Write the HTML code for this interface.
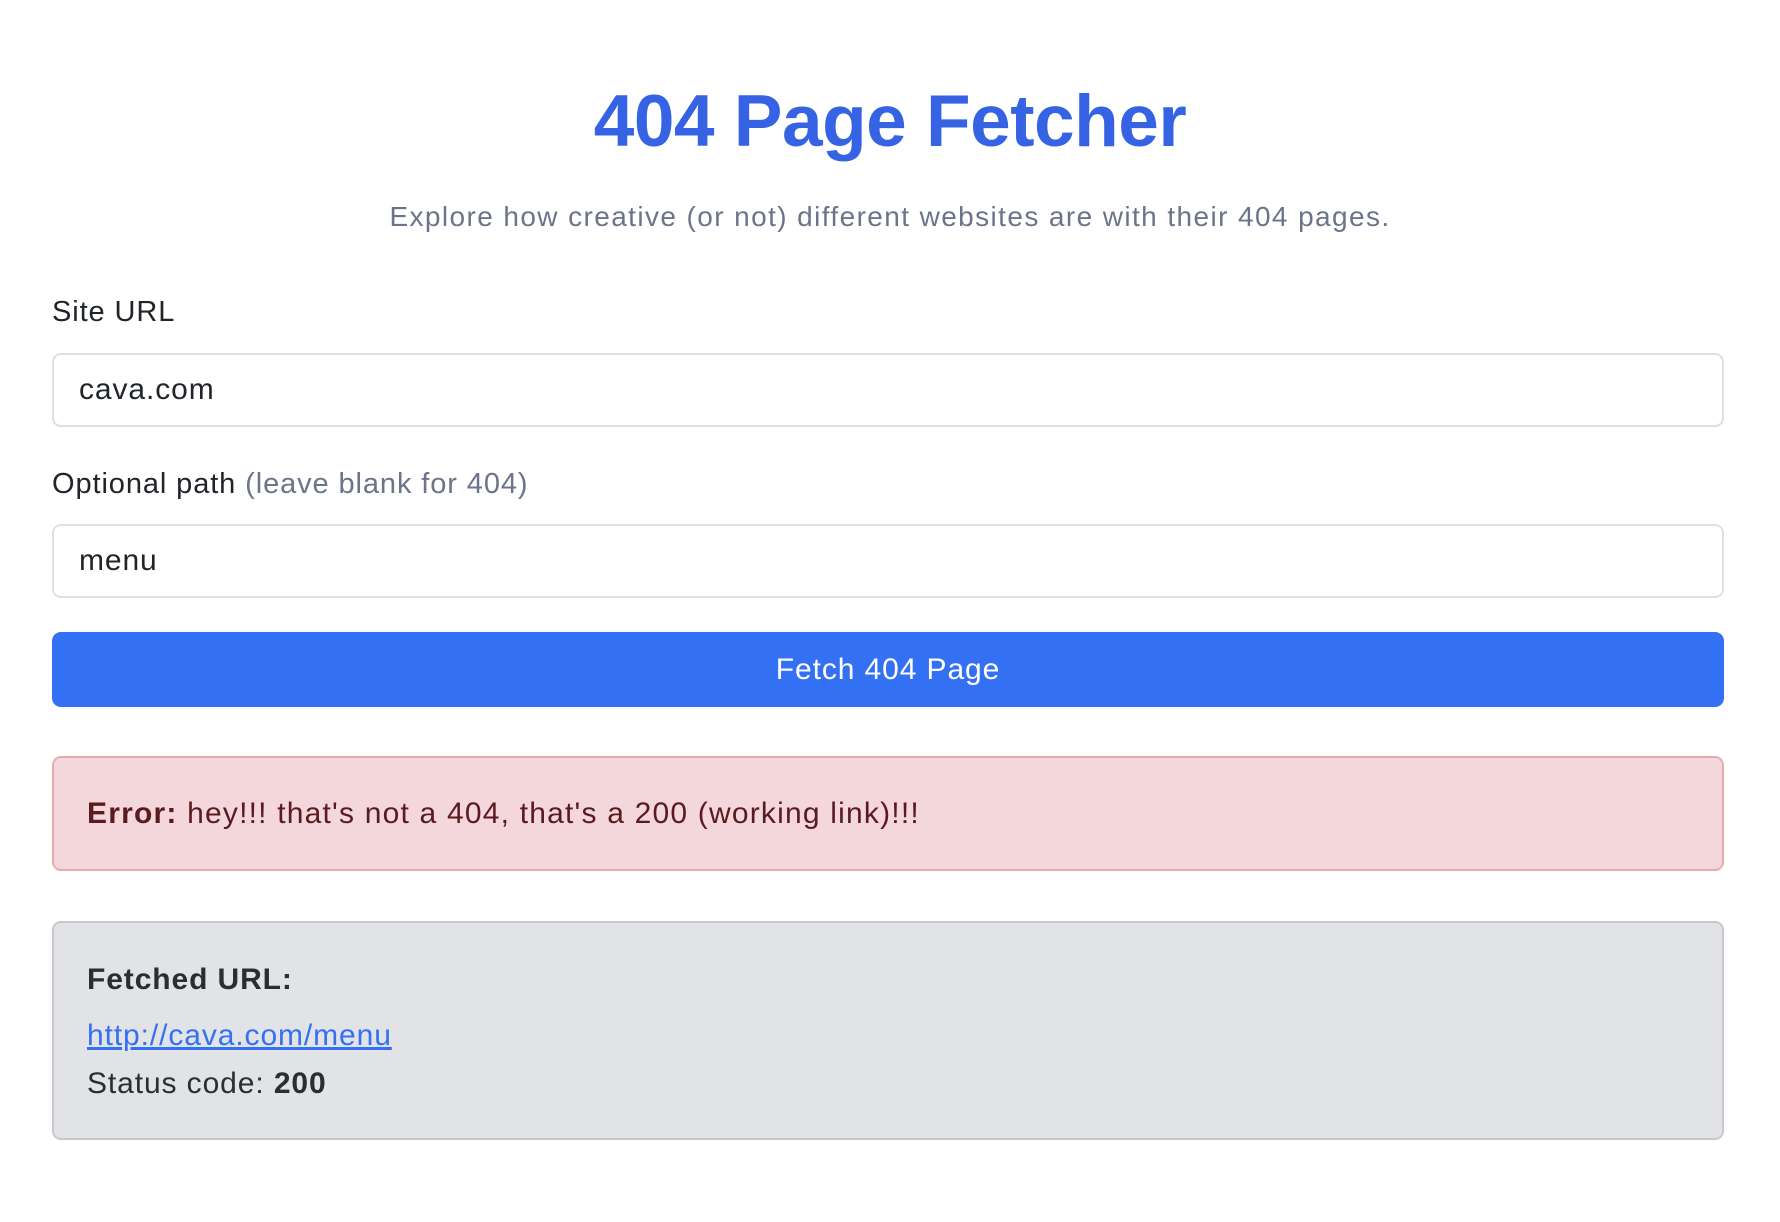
<!DOCTYPE html>
<html><head><meta charset="utf-8"><style>
*{box-sizing:border-box;margin:0;padding:0}
body{width:1780px;height:1222px;background:#fff;font-family:"Liberation Sans",sans-serif;color:#212529;position:relative;letter-spacing:0.9px}
.a{position:absolute}
h1{position:absolute;left:0;width:1780px;top:80px;text-align:center;font-size:73px;font-weight:bold;color:#3563e3;letter-spacing:-0.5px}
.sub{left:0;width:1780px;top:201px;text-align:center;font-size:28px;color:#6b7489;letter-spacing:1.4px}
.lbl{left:52px;font-size:29px}
.inp{left:52px;width:1672px;height:74px;border:2px solid #dee0e3;border-radius:9px;font-size:30px;padding-left:25px;line-height:70px}
.btn{left:52px;width:1672px;top:632px;height:75px;background:#3370f3;border-radius:9px;color:#fff;font-size:30px;text-align:center;line-height:75px}
.err{left:52px;width:1672px;top:756px;height:115px;background:#f3d7da;border:2px solid #eaa9b1;border-radius:9px;color:#5a1a20;font-size:30px;padding-left:33px;line-height:111px;letter-spacing:1.2px}
.res{left:52px;width:1672px;top:921px;height:219px;background:#e2e3e6;border:2px solid #c6c8cc;border-radius:9px;font-size:30px;color:#2b2d31}
</style></head><body>
<h1>404 Page Fetcher</h1>
<div class="a sub">Explore how creative (or not) different websites are with their 404 pages.</div>
<div class="a lbl" style="top:296px">Site URL</div>
<div class="a inp" style="top:353px">cava.com</div>
<div class="a lbl" style="top:468px">Optional path <span style="color:#6b7489">(leave blank for 404)</span></div>
<div class="a inp" style="top:524px">menu</div>
<div class="a btn">Fetch 404 Page</div>
<div class="a err"><b>Error:</b> hey!!! that's not a 404, that's a 200 (working link)!!!</div>
<div class="a res">
<div class="a" style="left:33px;top:40px;font-weight:bold">Fetched URL:</div>
<div class="a" style="left:33px;top:96px;color:#3370f3;text-decoration:underline">http://cava.com/menu</div>
<div class="a" style="left:33px;top:144px">Status code: <b>200</b></div>
</div>
</body></html>
